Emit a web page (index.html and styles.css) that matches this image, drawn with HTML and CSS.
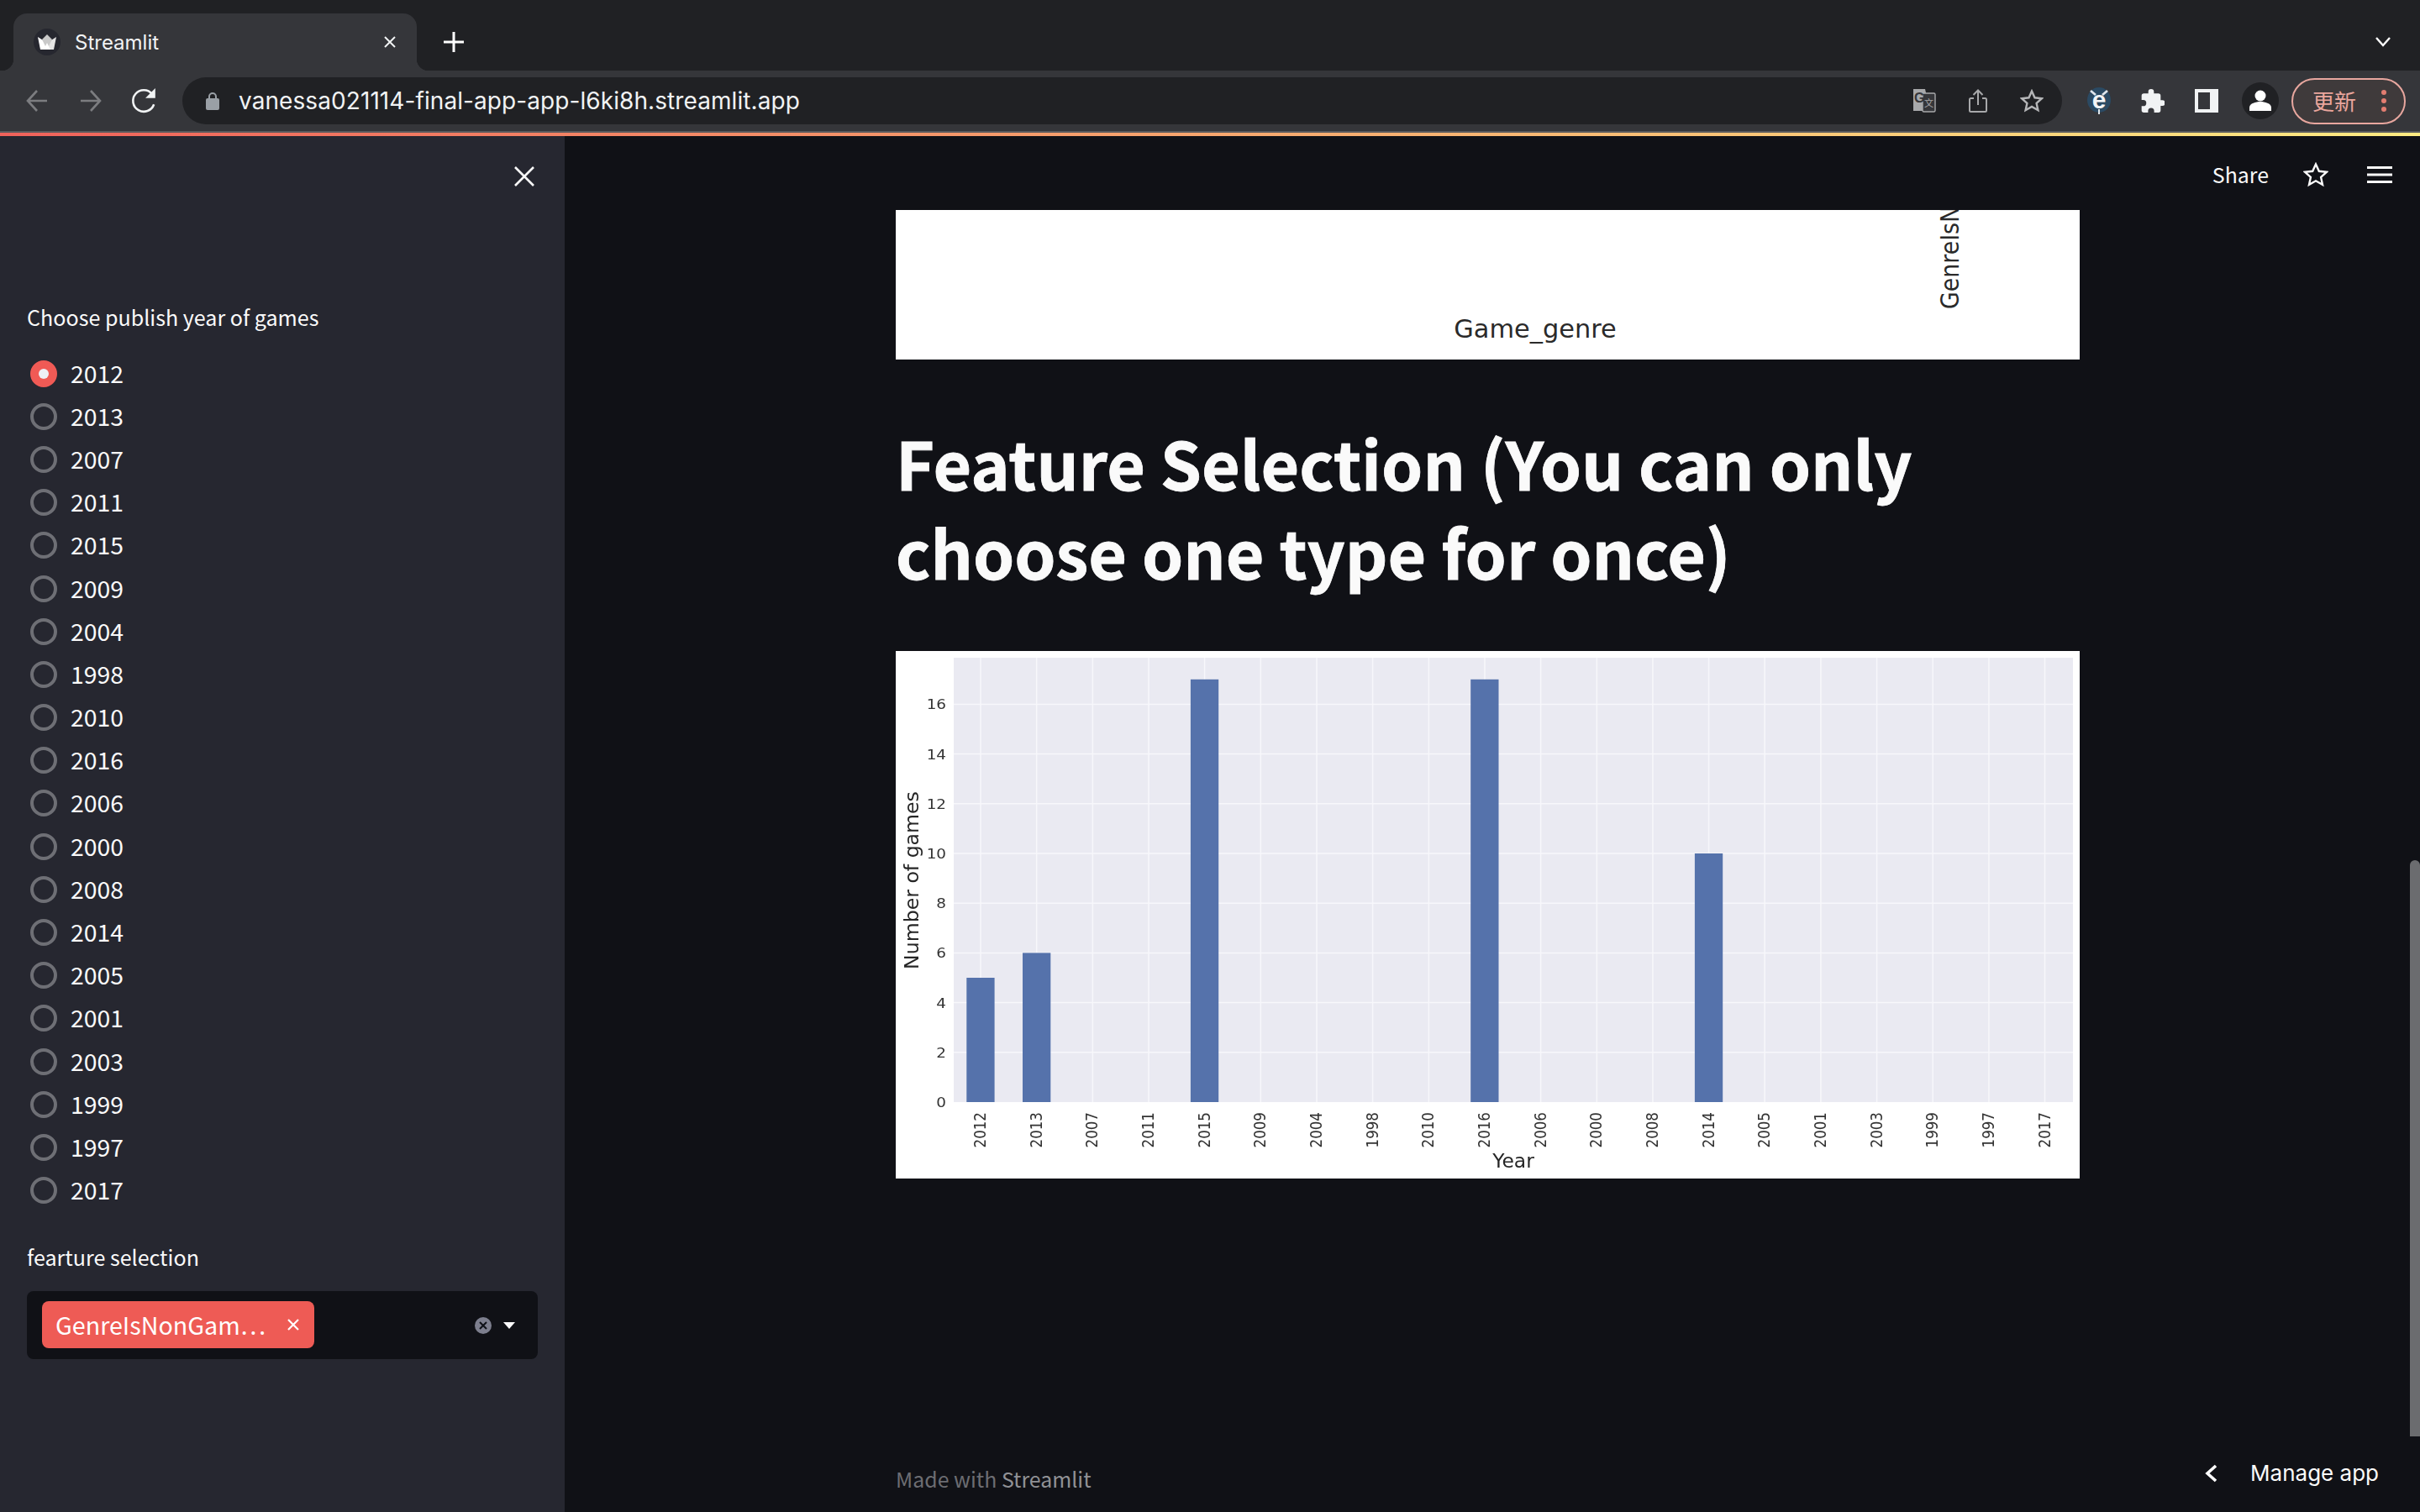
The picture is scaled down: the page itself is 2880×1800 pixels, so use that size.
FILE: index.html
```html
<!DOCTYPE html>
<html lang="en">
<head>
<meta charset="utf-8">
<title>Streamlit</title>
<link rel="stylesheet" href="styles.css">
</head>
<body>
<div class="tabstrip">
  <div class="tab">
    <svg class="favicon" viewBox="0 0 32 32"><circle cx="16" cy="16" r="16" fill="#26272f"/><path d="M5 10l11 7-3 8H8z" fill="#fff"/><path d="M27 10l-11 7 3 8h5z" fill="#e4e4e4"/><path d="M16 7l-6 6 6 12 6-12z" fill="#c9c9c9"/><path d="M16 17l-4 8h8z" fill="#fff"/></svg>
    <span class="tab-title">Streamlit</span>
    <svg class="tab-close" viewBox="0 0 16 16"><path d="M2 2l12 12M14 2L2 14" stroke="#f1f3f4" stroke-width="2" fill="none"/></svg>
  </div>
  <svg class="new-tab" viewBox="0 0 24 24"><path d="M12 0v24M0 12h24" stroke="#fff" stroke-width="3" fill="none"/></svg>
  <svg class="tab-menu" viewBox="0 0 18 12"><path d="M1 1l8 9 8-9" stroke="#fff" stroke-width="2.4" fill="none"/></svg>
</div>
<div class="toolbar">
  <div class="slot"><svg class="i26" viewBox="0 0 26 26"><path d="M25 13H3M13 1L2 13l11 12" stroke="#7c7d80" stroke-width="2.6" fill="none"/></svg></div>
  <div class="slot"><svg class="i26" viewBox="0 0 26 26"><path d="M1 13h22M13 1l11 12-11 12" stroke="#7c7d80" stroke-width="2.6" fill="none"/></svg></div>
  <div class="slot"><svg class="i30" viewBox="0 0 30 30"><path d="M25.5 19a12 12 0 1 1-2-11.5" stroke="#f1f3f4" stroke-width="2.4" fill="none"/><path d="M27 1v11H16z" fill="#f1f3f4"/></svg></div>
  <div class="omnibox">
    <svg class="lock" viewBox="0 0 16 22"><path d="M4 9V6a4 4 0 0 1 8 0v3" stroke="#9aa0a6" stroke-width="2" fill="none"/><rect y="8" width="16" height="14" rx="2" fill="#9aa0a6"/></svg>
    <span class="url">vanessa021114-final-app-app-l6ki8h.streamlit.app</span>
    <div class="slot slot-translate"><svg class="i28" viewBox="0 0 28 28"><path d="M1 0h14l6 26H1z" fill="#a8a9ab"/><rect x="12" y="5" width="15" height="22" rx="1.5" fill="#35363a" stroke="#a8a9ab" stroke-width="1.4"/><path d="M1 0h11v18H1z" fill="#a8a9ab"/><text x="2" y="16" class="t-g">G</text><text x="14" y="21" class="t-x">文</text></svg></div>
    <div class="slot"><svg class="i28" viewBox="0 0 28 28"><path d="M9 11H5.500a1.500 1.500 0 0 0-1.500 1.500v13a1.500 1.500 0 0 0 1.500 1.500h17a1.500 1.500 0 0 0 1.500-1.500v-13a1.500 1.500 0 0 0-1.500-1.500H19M14 19V2M8.500 7L14 1.500 19.500 7" stroke="#a8a9ab" stroke-width="2" fill="none"/></svg></div>
    <div class="slot"><svg class="i28" viewBox="0 0 28 28"><path d="M14 2.500l3.500 7.800 8.400.9-6.300 5.700 1.800 8.300L14 21l-7.400 4.200 1.800-8.300-6.300-5.700 8.400-.9z" stroke="#b5b6b8" stroke-width="2.400" fill="none"/></svg></div>
  </div>
  <div class="slot slot-first"><svg class="i32" viewBox="0 0 28 32"><ellipse cx="14" cy="15" rx="14" ry="15" fill="#2b4a63"/><path d="M4 4l6 5M24 4l-6 5" stroke="#dfe6ec" stroke-width="2.800"/><path d="M14 26v6" stroke="#dfe6ec" stroke-width="2"/><text x="14" y="25" class="t-e">e</text></svg></div>
  <div class="slot"><svg class="i28" viewBox="1.500 1 21 21"><path d="M20.500 11H19V7a2 2 0 0 0-2-2h-4V3.500a2.500 2.500 0 0 0-5 0V5H4a2 2 0 0 0-2 2v3.800h1.500a2.700 2.700 0 0 1 0 5.400H2V20a2 2 0 0 0 2 2h3.800v-1.500a2.700 2.700 0 0 1 5.400 0V22H17a2 2 0 0 0 2-2v-4h1.500a2.500 2.500 0 0 0 0-5z" fill="#f1f3f4"/></svg></div>
  <div class="slot"><svg class="i28" viewBox="0 0 28 28"><rect width="28" height="28" fill="#f1f3f4"/><rect x="4" y="4" width="14" height="20" fill="#35363a"/></svg></div>
  <div class="slot"><svg class="i44" viewBox="0 0 44 44"><circle cx="22" cy="22" r="22" fill="#202124"/><circle cx="22" cy="16" r="6.500" fill="#fff"/><path d="M9 34v-4c0-5 8-7 13-7s13 2 13 7v4z" fill="#fff"/></svg></div>
  <div class="update"><span class="update-text">更新</span><span class="dots"><i></i><i></i><i></i></span></div>
</div>
<div class="gradient"></div>
<div class="app">
  <aside class="sidebar">
    <div class="side-head"><svg class="side-close" viewBox="0 0 24 24"><path d="M1 1l22 22M23 1L1 23" stroke="#fafafa" stroke-width="2.600" fill="none"/></svg></div>
    <div class="side-label first">Choose publish year of games</div>
    <div class="radio-group">
      <div class="radio"><span class="dot on"></span>2012</div>
      <div class="radio"><span class="dot"></span>2013</div>
      <div class="radio"><span class="dot"></span>2007</div>
      <div class="radio"><span class="dot"></span>2011</div>
      <div class="radio"><span class="dot"></span>2015</div>
      <div class="radio"><span class="dot"></span>2009</div>
      <div class="radio"><span class="dot"></span>2004</div>
      <div class="radio"><span class="dot"></span>1998</div>
      <div class="radio"><span class="dot"></span>2010</div>
      <div class="radio"><span class="dot"></span>2016</div>
      <div class="radio"><span class="dot"></span>2006</div>
      <div class="radio"><span class="dot"></span>2000</div>
      <div class="radio"><span class="dot"></span>2008</div>
      <div class="radio"><span class="dot"></span>2014</div>
      <div class="radio"><span class="dot"></span>2005</div>
      <div class="radio"><span class="dot"></span>2001</div>
      <div class="radio"><span class="dot"></span>2003</div>
      <div class="radio"><span class="dot"></span>1999</div>
      <div class="radio"><span class="dot"></span>1997</div>
      <div class="radio"><span class="dot"></span>2017</div>
    </div>
    <div class="side-label second">fearture selection</div>
    <div class="select">
      <div class="tag"><span class="tag-text">GenreIsNonGam…</span><svg class="tag-x" viewBox="0 0 16 16"><path d="M2 2l12 12M14 2L2 14" stroke="#fff" stroke-width="2.200" fill="none"/></svg></div>
      <svg class="clear" viewBox="0 0 20 20"><circle cx="10" cy="10" r="10" fill="#7d7f8e"/><path d="M6 6l8 8M14 6l-8 8" stroke="#0e1117" stroke-width="2" fill="none"/></svg>
      <svg class="caret" viewBox="0 0 14 8"><path d="M0 0h14L7 8z" fill="#fafafa"/></svg>
    </div>
  </aside>
  <main class="main">
    <header class="main-head">
      <span class="share">Share</span>
      <svg class="head-star" viewBox="0 0 30 30"><path d="M15 2.500l3.800 8.300 9 1-6.700 6.100 1.900 8.900L15 22.300l-8 4.500 1.900-8.900-6.700-6.100 9-1z" stroke="#fafafa" stroke-width="2.400" fill="none"/></svg>
      <svg class="burger" viewBox="0 0 30 20"><path d="M0 1.500h30M0 10h30M0 18.500h30" stroke="#fafafa" stroke-width="3" fill="none"/></svg>
    </header>
    <div class="content">
      <svg class="figure-top" viewBox="1066 250 1409 178">
        <text x="1827" y="402" class="chart-big" text-anchor="middle">Game_genre</text>
        <text transform="translate(2331 368) rotate(-90) scale(1 1.15)" class="chart-side">GenreIsN</text>
      </svg>
      <h1 class="title">Feature Selection (You can only choose one type for once)</h1>
      <svg class="figure" viewBox="1065 775 1409 628">
        <rect x="1134" y="783" width="1332" height="529" fill="#eaeaf2"/>
        <g class="grid">
          <path d="M1134 1252.800H2466M1134 1193.600H2466M1134 1134.400H2466M1134 1075.200H2466M1134 1016H2466M1134 956.800H2466M1134 897.600H2466M1134 838.400H2466"/>
          <path d="M1166 783V1312M1232.700 783V1312M1299.300 783V1312M1366 783V1312M1432.600 783V1312M1499.300 783V1312M1566 783V1312M1632.600 783V1312M1699.300 783V1312M1765.900 783V1312M1832.600 783V1312M1899.300 783V1312M1965.900 783V1312M2032.600 783V1312M2099.200 783V1312M2165.900 783V1312M2232.600 783V1312M2299.200 783V1312M2365.900 783V1312M2432.500 783V1312"/>
        </g>
        <g class="bars">
          <rect x="1149.300" y="1164" width="33.300" height="148"/>
          <rect x="1216" y="1134.400" width="33.300" height="177.600"/>
          <rect x="1415.900" y="808.800" width="33.300" height="503.200"/>
          <rect x="1749.200" y="808.800" width="33.300" height="503.200"/>
          <rect x="2015.900" y="1016" width="33.300" height="296"/>
        </g>
        <g class="tick" text-anchor="end">
          <text transform="translate(1125 1318) scale(1.1 1)">0</text>
          <text transform="translate(1125 1258.800) scale(1.1 1)">2</text>
          <text transform="translate(1125 1199.600) scale(1.1 1)">4</text>
          <text transform="translate(1125 1140.400) scale(1.1 1)">6</text>
          <text transform="translate(1125 1081.200) scale(1.1 1)">8</text>
          <text transform="translate(1125 1022) scale(1.1 1)">10</text>
          <text transform="translate(1125 962.800) scale(1.1 1)">12</text>
          <text transform="translate(1125 903.600) scale(1.1 1)">14</text>
          <text transform="translate(1125 844.400) scale(1.1 1)">16</text>
        </g>
        <g class="tick" text-anchor="end">
          <text transform="translate(1172 1324) rotate(-90) scale(1 1.2)">2012</text>
          <text transform="translate(1238.700 1324) rotate(-90) scale(1 1.2)">2013</text>
          <text transform="translate(1305.300 1324) rotate(-90) scale(1 1.2)">2007</text>
          <text transform="translate(1372 1324) rotate(-90) scale(1 1.2)">2011</text>
          <text transform="translate(1438.600 1324) rotate(-90) scale(1 1.2)">2015</text>
          <text transform="translate(1505.300 1324) rotate(-90) scale(1 1.2)">2009</text>
          <text transform="translate(1572 1324) rotate(-90) scale(1 1.2)">2004</text>
          <text transform="translate(1638.600 1324) rotate(-90) scale(1 1.2)">1998</text>
          <text transform="translate(1705.300 1324) rotate(-90) scale(1 1.2)">2010</text>
          <text transform="translate(1771.900 1324) rotate(-90) scale(1 1.2)">2016</text>
          <text transform="translate(1838.600 1324) rotate(-90) scale(1 1.2)">2006</text>
          <text transform="translate(1905.300 1324) rotate(-90) scale(1 1.2)">2000</text>
          <text transform="translate(1971.900 1324) rotate(-90) scale(1 1.2)">2008</text>
          <text transform="translate(2038.600 1324) rotate(-90) scale(1 1.2)">2014</text>
          <text transform="translate(2105.200 1324) rotate(-90) scale(1 1.2)">2005</text>
          <text transform="translate(2171.900 1324) rotate(-90) scale(1 1.2)">2001</text>
          <text transform="translate(2238.600 1324) rotate(-90) scale(1 1.2)">2003</text>
          <text transform="translate(2305.200 1324) rotate(-90) scale(1 1.2)">1999</text>
          <text transform="translate(2371.900 1324) rotate(-90) scale(1 1.2)">1997</text>
          <text transform="translate(2438.500 1324) rotate(-90) scale(1 1.2)">2017</text>
        </g>
        <text x="1800" y="1390" class="axis-year" text-anchor="middle">Year</text>
        <text transform="translate(1092 1048) rotate(-90)" class="axis" text-anchor="middle">Number of games</text>
      </svg>
    </div>
    <footer class="foot">Made with <span class="foot-brand">Streamlit</span></footer>
    <div class="scrollbar"></div>
    <div class="manage">
      <svg class="manage-chev" viewBox="0 0 16 22"><path d="M13 2L3 11l10 9" stroke="#fff" stroke-width="3.600" fill="none"/></svg>
      <span>Manage app</span>
    </div>
  </main>
</div>
</body>
</html>
```
FILE: styles.css
```css
* { box-sizing: border-box; }
html, body { margin: 0; height: 1800px; overflow: hidden; background: #101116; }
body { font-family: "Noto Sans CJK SC", "Noto Sans", sans-serif; color: #fafafa; }
svg { display: block; flex: none; }

.tabstrip { height: 84px; background: #202124; display: flex; align-items: flex-end; padding-left: 16px; position: relative; font-family: Inter, "Liberation Sans", sans-serif; }
.tab { width: 480px; height: 68px; background: #35363a; border-radius: 16px 16px 0 0; display: flex; align-items: center; padding: 0 24px; position: relative; }
.tab::before, .tab::after { content: ""; position: absolute; bottom: 0; width: 14px; height: 14px; }
.tab::before { left: -14px; background: radial-gradient(circle at 0 0, #202124 14px, #35363a 14.5px); }
.tab::after { right: -14px; background: radial-gradient(circle at 100% 0, #202124 14px, #35363a 14.5px); }
.favicon { width: 32px; height: 32px; }
.tab-title { margin-left: 17px; font-size: 24px; color: #f1f3f4; flex: 1; }
.tab-close { width: 16px; height: 16px; }
.new-tab { width: 24px; height: 24px; margin: 0 0 22px 32px; }
.tab-menu { width: 18px; height: 12px; margin: 0 35px 28px auto; }

.toolbar { height: 72px; background: #35363a; display: flex; align-items: center; padding-left: 12px; }
.slot { width: 64px; height: 56px; display: flex; align-items: center; justify-content: center; flex: none; }
.i26 { width: 26px; height: 26px; }
.i28 { width: 28px; height: 28px; }
.i30 { width: 32px; height: 32px; }
.i32 { width: 28px; height: 32px; overflow: visible; }
.i44 { width: 44px; height: 44px; }
.omnibox { margin-left: 13px; width: 2237px; height: 56px; border-radius: 28px; background: #202124; display: flex; align-items: center; padding: 0 4px 0 28px; }
.lock { width: 16px; height: 22px; }
.url { margin-left: 23px; font-family: Inter, "Liberation Sans", sans-serif; font-size: 28px; color: #f1f3f4; flex: 1; white-space: nowrap; letter-spacing: 0.08px; }
.t-g { font: 700 16px "Liberation Sans", sans-serif; fill: #35363a; }
.t-x { font: 400 11px "Noto Sans CJK SC", sans-serif; fill: #a8a9ab; }
.t-e { font: 700 30px "Liberation Sans", sans-serif; fill: #f3f5f7; text-anchor: middle; }
.slot-first { margin-left: 12px; }
.update { width: 136px; height: 55px; margin-left: 5px; border: 2px solid #e8a79f; border-radius: 28px; background: #3f3a3b; display: flex; align-items: center; padding-left: 23px; }
.update-text { font-size: 26px; line-height: 32px; color: #eba69d; }
.dots { display: flex; flex-direction: column; gap: 4px; margin-left: 30px; }
.dots i { width: 6px; height: 6px; border-radius: 50%; background: #e37d71; display: block; }

.gradient { height: 6px; background: linear-gradient(#5a5b5e 0 2px, transparent 2px), linear-gradient(90deg, #ef625b, #ffeb82); }

.app { height: 1638px; display: flex; }
.sidebar { width: 672px; background: #262730; padding: 0 32px; flex: none; }
.side-head { height: 96px; display: flex; align-items: center; justify-content: flex-end; padding-right: 4px; }
.side-close { width: 24px; height: 24px; }
.side-label { font-size: 25.1px; line-height: 40px; color: #fafafa; }
.side-label.first { margin-top: 99px; }
.side-label.second { margin-top: 33px; }
.radio-group { margin-top: 22px; }
.radio { height: 51.2px; padding: 0 0 3px 4px; display: flex; align-items: center; font-size: 28.4px; color: #fafafa; }
.dot { width: 32px; height: 32px; border-radius: 50%; border: 4px solid #6e6f75; margin: 3px 16px 0 0; flex: none; }
.dot.on { background: #f05a55; border: 10px solid #f05a55; }
.dot.on::after { content: ""; display: block; width: 12px; height: 12px; border-radius: 50%; background: #eef0f6; }
.select { margin-top: 21px; width: 608px; height: 81px; border-radius: 8px; background: #101116; display: flex; align-items: center; padding: 0 27px 0 18px; }
.tag { width: 324px; height: 56px; border-radius: 8px; background: #ee5b55; display: flex; align-items: center; padding: 0 17px 0 16px; }
.tag-text { font-size: 28.7px; line-height: 40px; color: #fff; flex: 1; white-space: nowrap; }
.tag-x { width: 16px; height: 16px; }
.clear { width: 20px; height: 20px; margin: 1px 0 0 auto; }
.caret { width: 14px; height: 8px; margin: 1px 0 0 14px; }

.main { flex: 1; display: flex; flex-direction: column; position: relative; overflow: hidden; background: #101116; }
.main-head { height: 88px; padding: 4px 33px 0 0; display: flex; align-items: center; justify-content: flex-end; flex: none; }
.share { font-size: 24.9px; line-height: 40px; margin-bottom: 2px; }
.head-star { width: 30px; height: 30px; margin-left: 41px; }
.burger { width: 30px; height: 20px; margin-left: 46px; }
.content { width: 1409px; margin-left: 394px; }
.figure-top { width: 1409px; height: 178px; background: #fff; }
.chart-big { font: 400 30.4px "DejaVu Sans", sans-serif; fill: #2a2a2a; }
.chart-side { font: 400 26.8px "DejaVu Sans", sans-serif; fill: #2a2a2a; }
.title { margin: 70px 0 66px; font-size: 78.8px; line-height: 105.6px; font-weight: 700; color: #fafafa; width: 1300px; -webkit-text-stroke: 0.8px #fafafa; }
.figure { width: 1409px; height: 628px; background: #fff; filter: blur(0.5px); }
.grid path { stroke: #f7f7fb; stroke-width: 1.5; fill: none; }
.bars rect { fill: #5572ab; }
.tick text { font: 400 16.7px "DejaVu Sans", sans-serif; fill: #333; }
.axis { font: 400 23.6px "DejaVu Sans", sans-serif; fill: #262626; }
.axis-year { font: 400 23.400px "DejaVu Sans", sans-serif; fill: #262626; }
.foot { margin-top: auto; padding: 0 0 20px 394px; font-size: 24.9px; line-height: 40px; color: #6c6d72; }
.foot-brand { color: #909195; }
.scrollbar { position: absolute; right: 0; top: 862px; width: 12px; height: 686px; background: #6b6c6f; border-radius: 6px 6px 0 0; }
.manage { position: absolute; right: 49px; top: 1572px; display: flex; align-items: center; font-family: Inter, "Liberation Sans", sans-serif; font-size: 26px; line-height: 40px; color: #fafafa; }
.manage-chev { width: 16px; height: 22px; margin-right: 38px; }
```
